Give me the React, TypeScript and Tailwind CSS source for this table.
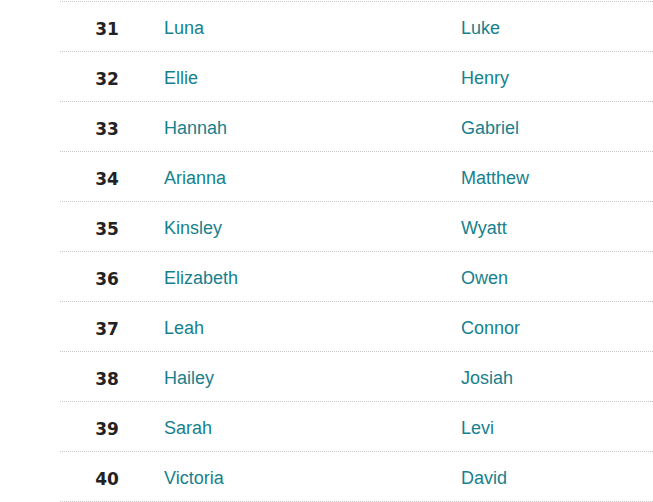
const rows: [number, string, string][] = [
  [31, "Luna", "Luke"],
  [32, "Ellie", "Henry"],
  [33, "Hannah", "Gabriel"],
  [34, "Arianna", "Matthew"],
  [35, "Kinsley", "Wyatt"],
  [36, "Elizabeth", "Owen"],
  [37, "Leah", "Connor"],
  [38, "Hailey", "Josiah"],
  [39, "Sarah", "Levi"],
  [40, "Victoria", "David"],
];

export default function App() {
  return (
    <div className="w-[653px] h-[502px] bg-white overflow-hidden pt-[1px]">
      <div className="ml-[60px] w-[593px] border-b border-dotted border-[#c8c8c8]">
        {rows.map(([n, g, b]) => (
          <div
            key={n}
            className="grid grid-cols-[94px_307px_1fr] h-[50px] items-center border-t border-dotted border-[#c8c8c8]"
          >
            <div
              className="text-center font-bold text-[17px] text-[#222222] pt-[6px]"
              style={{ fontFamily: '"DejaVu Sans", sans-serif' }}
            >
              {n}
            </div>
            <div
              className="pl-[10px] text-[18px] text-[#177f8d] pt-[4px]"
              style={{ fontFamily: '"Liberation Sans", Arial, sans-serif' }}
            >
              {g}
            </div>
            <div
              className="text-[18px] text-[#177f8d] pt-[4px]"
              style={{ fontFamily: '"Liberation Sans", Arial, sans-serif' }}
            >
              {b}
            </div>
          </div>
        ))}
      </div>
    </div>
  );
}
